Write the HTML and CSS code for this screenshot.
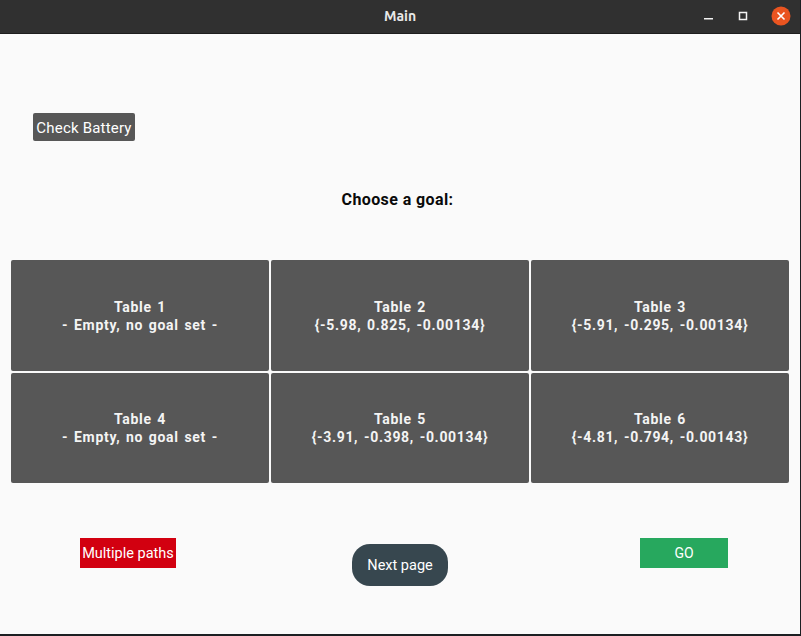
FILE: index.html
```html
<!DOCTYPE html>
<html>
<head>
<meta charset="utf-8">
<link rel="stylesheet" href="styles.css">
</head>
<body>
<div class="window">
  <div class="titlebar">
    <span class="title">Main</span>
    <div class="controls">
      <svg class="ctl" width="12" height="12" viewBox="0 0 12 12"><rect x="1" y="8" width="9" height="1.5" fill="#f2f2f2"/></svg>
      <svg class="ctl" width="12" height="12" viewBox="0 0 12 12"><rect x="2.5" y="2.5" width="7" height="7" fill="none" stroke="#f2f2f2" stroke-width="1.5"/></svg>
      <svg class="ctl close" width="20" height="20" viewBox="0 0 20 20"><circle cx="10" cy="10" r="9.5" fill="#e95420"/><path d="M6.5 6.5 L13.5 13.5 M13.5 6.5 L6.5 13.5" stroke="#fff" stroke-width="1.6"/></svg>
    </div>
  </div>
  <div class="content">
    <div class="battery-row"><button class="btn-battery">Check Battery</button></div>
    <div class="heading">Choose a goal:</div>
    <div class="grid">
      <div class="cell">Table 1<br>- Empty, no goal set -</div>
      <div class="cell">Table 2<br>{-5.98, 0.825, -0.00134}</div>
      <div class="cell">Table 3<br>{-5.91, -0.295, -0.00134}</div>
      <div class="cell">Table 4<br>- Empty, no goal set -</div>
      <div class="cell">Table 5<br>{-3.91, -0.398, -0.00134}</div>
      <div class="cell">Table 6<br>{-4.81, -0.794, -0.00143}</div>
    </div>
    <div class="actions">
      <button class="btn-multi">Multiple paths</button>
      <button class="btn-next">Next page</button>
      <button class="btn-go">GO</button>
    </div>
  </div>
</div>
</body>
</html>
```
FILE: styles.css
```css
html, body {
  margin: 0;
  padding: 0;
  background: #1c1f22;
}
body {
  width: 801px;
  height: 636px;
  overflow: hidden;
  font-family: Roboto, "Liberation Sans", sans-serif;
}
.window {
  width: 800px;
  height: 634px;
  border-right: 1px solid #1c1f22;
  display: flex;
  flex-direction: column;
}
.titlebar {
  height: 33px;
  background: #303030;
  border-bottom: 1px solid #1e1e1e;
  position: relative;
  display: flex;
  align-items: center;
  justify-content: center;
}
.title {
  color: #e8e8e8;
  font-family: Ubuntu, "Noto Sans", "DejaVu Sans", sans-serif;
  font-weight: bold;
  font-size: 14px;
  margin-top: -2px;
}
.controls {
  position: absolute;
  right: 9px;
  top: 6px;
  display: flex;
  align-items: center;
  gap: 22px;
}
.ctl { display: block; }
.content {
  flex: 1;
  background: #fafafa;
  padding: 0 11px;
  display: flex;
  flex-direction: column;
}
.battery-row {
  margin-top: 79px;
  padding-left: 22px;
  height: 28px;
}
button {
  font-family: Roboto, "Liberation Sans", sans-serif;
  border: none;
  color: #ffffff;
  padding: 0;
  font-size: 15px;
}
.btn-battery {
  width: 102px;
  height: 28px;
  background: #575757;
  border-radius: 2px;
  letter-spacing: 0.2px;
  padding-top: 2px;
}
.heading {
  margin-top: 49px;
  text-align: center;
  font-weight: bold;
  font-size: 16px;
  line-height: 19px;
  height: 19px;
  color: #0a0a0a;
  letter-spacing: 0.4px;
  padding-right: 5px;
}
.grid {
  margin-top: 51px;
  display: grid;
  grid-template-columns: 258px 258px 258px;
  grid-template-rows: 111px 110px;
  gap: 2px;
}
.cell {
  background: #575757;
  border-radius: 2px;
  color: #f4f4f4;
  font-weight: bold;
  font-size: 14px;
  line-height: 18px;
  letter-spacing: 0.7px;
  word-spacing: 1.5px;
  display: flex;
  align-items: center;
  justify-content: center;
  text-align: center;
}
.actions {
  margin-top: 55px;
  display: flex;
  align-items: flex-start;
  padding-left: 69px;
}
.btn-multi {
  width: 96px;
  height: 30px;
  background: #d20010;
  font-size: 14.5px;
}
.btn-next {
  margin-left: 176px;
  margin-top: 6px;
  width: 96px;
  height: 42px;
  background: #37474f;
  border-radius: 18px;
  font-size: 14.5px;
}
.btn-go {
  margin-left: 192px;
  width: 88px;
  height: 30px;
  background: #27a85e;
  font-size: 14px;
}
```
